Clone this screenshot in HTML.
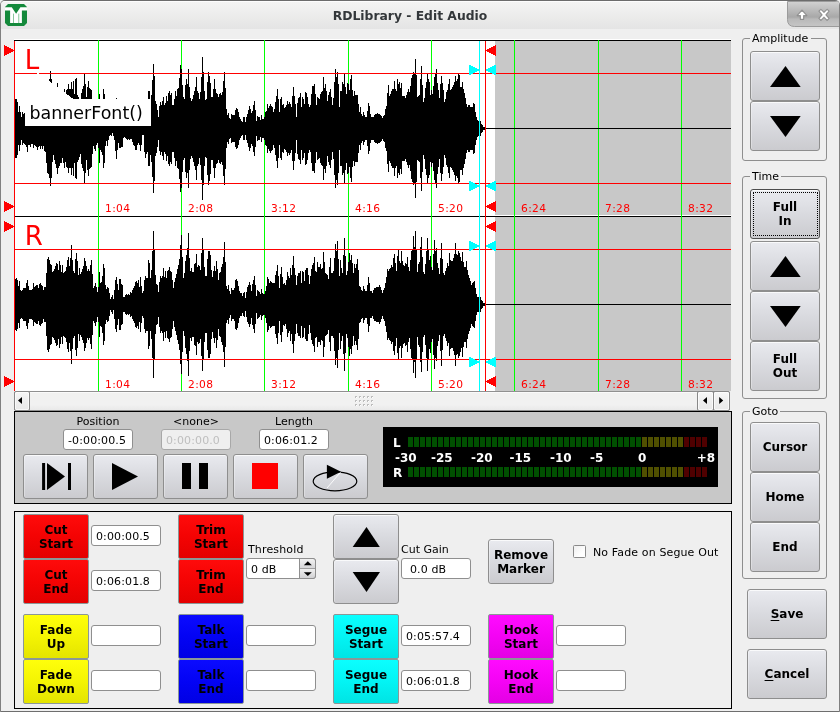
<!DOCTYPE html>
<html lang="en"><head><meta charset="utf-8"><title>RDLibrary - Edit Audio</title>
<style>
*{box-sizing:border-box;margin:0;padding:0}
html,body{width:840px;height:712px;overflow:hidden;background:#efefef}
body{font-family:"DejaVu Sans","Liberation Sans",sans-serif;font-size:11px;color:#000;position:relative}
.abs{position:absolute}
#win{will-change:transform;position:absolute;left:0;top:0;width:840px;height:712px;background:#efefef;border:1px solid #808080;border-top:1px solid #6c6c6c;border-bottom:1px solid #6e6e6e;border-radius:5px 5px 1px 1px;overflow:hidden}
#tbar{position:absolute;left:0;top:1px;width:840px;height:28px;background:linear-gradient(#fdfdfd 0,#fdfdfd 1px,#f4f4f3 1px,#e4e4e4 28px)}
#title{position:absolute;left:0;top:0;width:820px;height:30px;line-height:32px;text-align:center;font-weight:bold;font-size:12.35px;color:#33373a}
.btn{position:absolute;border:1px solid #8e8e8e;border-radius:3px;background:linear-gradient(#e9eaef,#d9dadf 50%,#cbcbcf);box-shadow:inset 0 1px 0 rgba(255,255,255,0.75),inset 1px 0 0 rgba(255,255,255,0.3);font-weight:bold;font-size:12px;text-align:center;line-height:14px;display:flex;align-items:center;justify-content:center;color:#000}
.gb{position:absolute;border:1px solid #8e8e8e;border-radius:3px}
.gbt{position:absolute;background:#efefef;padding:0 2px;font-size:11px;line-height:13px;white-space:nowrap}
.inp{position:absolute;border:1px solid #8f8f8f;border-radius:3px;background:#fff;font-size:11px;line-height:18px;padding:2px 0 0 4px;white-space:nowrap;letter-spacing:0.12px}
.lbl{position:absolute;font-size:11px;line-height:13px;white-space:nowrap}
.cbtn{position:absolute;border:1px solid #8e8e8e;border-radius:3px;font-weight:bold;font-size:12px;text-align:center;line-height:14px;display:flex;align-items:center;justify-content:center;color:#000}
</style></head>
<body><div id="win">
<div class="abs" style="left:-1px;top:-1px;width:840px;height:712px">
<div id="tbar"></div>
<div id="title">RDLibrary - Edit Audio</div>
<svg class="abs" style="left:0;top:0" width="840" height="30" viewBox="0 0 840 30">
<defs>
<linearGradient id="tabg" x1="0" y1="0" x2="0" y2="1"><stop offset="0" stop-color="#d2d2d2"/><stop offset="0.62" stop-color="#a8a8a8"/><stop offset="0.7" stop-color="#b9b9b9"/><stop offset="1" stop-color="#c6c6c6"/></linearGradient>
</defs>
<path d="M787.5,1.5 H840 V26.5 H794.5 Q787.5,26.5 787.5,19.5 Z" fill="url(#tabg)" stroke="#9b9b9b" stroke-width="1"/>
<g fill="#fff" stroke="#7d7d7d" stroke-width="1.2" stroke-opacity="0.75" stroke-linejoin="round">
<path d="M802,10.2 L806.8,15.6 L803.6,15.6 L803.6,19.3 L800.4,19.3 L800.4,15.6 L797.2,15.6 Z"/>
<path d="M819,11.2 L820.9,9.3 L824,12.4 L827.1,9.3 L829,11.2 L825.9,14.8 L829,18.4 L827.1,20.3 L824,17.2 L820.9,20.3 L819,18.4 L822.1,14.8 Z"/>
</g>
<g transform="translate(5,4)">
<path d="M3,0 H19 L22,3 V19 L19,22 H3 L0,19 V3 Z" fill="#14893b"/>
<path d="M0,3.2 H6.8 L11.1,9.7 L15.4,3.2 H22 V6.4 H16.9 V19 H5.1 V6.4 H0 Z" fill="#fff"/>
<rect x="8" y="9.6" width="0.8" height="9.4" fill="#6dba85"/>
<rect x="13.4" y="9.6" width="0.8" height="9.4" fill="#6dba85"/>
</g>
</svg>

<div class="gb" style="left:742px;top:38px;width:85px;height:123px"></div><div class="gbt" style="left:750px;top:32px;width:61px">Amplitude</div>
<div class="btn" style="left:750px;top:51px;width:70px;height:50px;"><svg width="70" height="50" viewBox="0 0 70 50" style="position:absolute;left:-1px;top:-1px"><polygon points="35.5,15 50.7,36 20,36" fill="#000"/></svg></div>
<div class="btn" style="left:750px;top:101px;width:70px;height:50px;"><svg width="70" height="50" viewBox="0 0 70 50" style="position:absolute;left:-1px;top:-1px"><polygon points="20,15 50.7,15 35.5,36" fill="#000"/></svg></div>
<div class="gb" style="left:742px;top:176px;width:85px;height:223px"></div><div class="gbt" style="left:750px;top:170px;width:31px">Time</div>
<div class="btn" style="left:750px;top:189px;width:70px;height:50px;border-color:#4d4d4d;">Full<br>In</div>
<div class="abs" style="left:753px;top:192px;width:65px;height:44px;border:1px dotted #000;border-radius:1px"></div>
<div class="btn" style="left:750px;top:241px;width:70px;height:50px;"><svg width="70" height="50" viewBox="0 0 70 50" style="position:absolute;left:-1px;top:-1px"><polygon points="35.5,15 50.7,36 20,36" fill="#000"/></svg></div>
<div class="btn" style="left:750px;top:291px;width:70px;height:50px;"><svg width="70" height="50" viewBox="0 0 70 50" style="position:absolute;left:-1px;top:-1px"><polygon points="20,15 50.7,15 35.5,36" fill="#000"/></svg></div>
<div class="btn" style="left:750px;top:341px;width:70px;height:50px;">Full<br>Out</div>
<div class="gb" style="left:742px;top:411px;width:85px;height:168px"></div><div class="gbt" style="left:750px;top:405px;width:30px">Goto</div>
<div class="btn" style="left:750px;top:422px;width:70px;height:50px;">Cursor</div>
<div class="btn" style="left:750px;top:472px;width:70px;height:50px;">Home</div>
<div class="btn" style="left:750px;top:522px;width:70px;height:50px;">End</div>
<div class="btn" style="left:747px;top:589px;width:80px;height:50px;"><span style="text-decoration:underline;text-underline-offset:2px;text-decoration-thickness:1px">S</span>ave</div>
<div class="btn" style="left:747px;top:649px;width:80px;height:50px;"><span style="text-decoration:underline;text-underline-offset:2px;text-decoration-thickness:1px">C</span>ancel</div>
<svg class="abs" style="left:0;top:0" width="840" height="400" viewBox="0 0 840 400" shape-rendering="crispEdges">
<rect x="14" y="39" width="717" height="352" fill="#fff"/>
<rect x="495" y="41" width="236" height="174" fill="#c8c8c8"/>
<rect x="495" y="217" width="236" height="174" fill="#c8c8c8"/>
<rect x="14" y="40" width="717" height="1" fill="#000"/><rect x="14" y="216" width="717" height="1" fill="#000"/>
<path d="M98,40V391M181,40V391M264,40V391M348,40V391M431,40V391M514,40V391M598,40V391M681,40V391" transform="translate(0.5,0)" stroke="#00ff00" stroke-width="1" fill="none"/>
<g font-family="DejaVu Sans, sans-serif" font-size="10.67" letter-spacing="0.35" fill="#ff0000" shape-rendering="auto">
<text x="105" y="212">1:04</text><text x="105" y="388">1:04</text>
<text x="188" y="212">2:08</text><text x="188" y="388">2:08</text>
<text x="271" y="212">3:12</text><text x="271" y="388">3:12</text>
<text x="355" y="212">4:16</text><text x="355" y="388">4:16</text>
<text x="438" y="212">5:20</text><text x="438" y="388">5:20</text>
<text x="521" y="212">6:24</text><text x="521" y="388">6:24</text>
<text x="605" y="212">7:28</text><text x="605" y="388">7:28</text>
<text x="688" y="212">8:32</text><text x="688" y="388">8:32</text>
</g>
<path d="M15,129V99H17V102H18V112H19V106H20V112H21V117H22V112H23V114H24V113H25V112H26V110H27V105H28V112H30V110H31V113H33V109H34V112H35V111H36V110H37V107H38V110H39V111H40V108H41V111H42V108H43V111H44V106H45V105H46V94H47V84H48V83H49V79H50V71H51V79H52V95H53V102H54V97H55V93H56V89H57V83H58V89H59V91H60V94H62V99H63V94H64V89H65V95H66V90H67V89H68V84H69V89H71V82H72V89H73V81H74V94H75V79H76V78H77V95H78V97H79V100H80V103H81V93H82V89H83V86H84V74H85V84H86V97H87V87H88V81H89V88H90V89H91V90H92V103H93V111H94V108H95V106H96V112H97V114H98V109H99V94H100V107H101V105H102V102H103V89H104V94H105V111H106V116H107V111H108V117H109V121H110V122H111V121H112V124H113V121H114V117H115V106H116V98H117V107H118V114H119V109H121V110H123V119H124V120H125V119H126V118H127V117H128V118H129V117H130V118H132V115H133V112H134V111H135V107H137V112H138V114H139V112H140V106H141V112H142V122H144V105H145V99H146V103H147V105H148V91H150V102H151V95H152V80H153V64H154V76H155V101H156V104H157V110H158V117H159V106H160V102H161V105H162V101H163V97H164V105H165V103H166V96H167V101H168V93H169V91H170V95H171V93H172V105H174V99H175V91H176V96H177V89H178V88H179V78H180V65H181V69H182V85H183V97H184V99H185V85H186V79H187V84H188V69H189V87H190V98H191V101H192V99H193V95H194V91H195V87H196V77H197V91H198V93H199V99H200V92H201V77H202V57H203V72H204V91H205V100H206V99H207V82H208V72H209V76H210V83H211V97H213V89H214V79H215V89H216V93H217V94H218V97H219V94H220V93H221V95H222V92H223V81H224V72H225V88H226V109H227V115H228V113H229V118H230V119H231V114H232V115H235V110H236V108H237V109H238V112H239V117H240V119H241V121H242V122H243V117H245V122H246V117H247V114H248V110H249V106H250V109H251V113H252V111H253V105H254V101H255V110H256V121H257V116H258V117H260V120H261V115H262V119H264V117H265V112H266V111H267V104H268V108H269V106H270V104H271V106H272V107H273V112H274V109H275V102H276V96H277V89H278V99H279V112H280V99H281V97H282V105H283V104H284V108H285V107H286V105H287V101H288V104H289V102H290V104H291V107H292V96H293V87H294V96H295V104H296V117H297V103H298V98H299V97H300V93H301V107H302V97H303V99H304V104H305V92H306V93H307V97H308V104H309V107H310V105H311V94H312V86H314V84H315V94H316V105H317V97H318V98H319V99H320V94H321V92H322V91H323V77H324V88H325V84H326V91H327V101H328V95H329V92H330V89H331V97H332V105H333V98H334V82H335V69H336V77H337V72H338V84H339V107H340V91H342V82H343V84H344V74H345V87H346V94H347V83H348V84H349V90H350V79H351V75H352V90H353V96H354V91H355V95H358V104H359V112H360V107H361V114H362V116H363V112H364V115H365V117H367V111H368V103H369V106H370V114H371V117H374V115H375V114H377V113H378V114H380V115H381V116H382V118H383V116H384V115H385V109H386V106H387V93H388V85H389V96H390V94H391V91H392V89H394V81H395V89H396V91H397V79H398V84H399V82H400V88H401V83H402V96H405V98H406V95H407V92H408V89H409V92H410V86H411V78H412V75H413V72H414V74H415V59H416V75H417V97H418V96H419V95H420V79H421V66H422V85H423V102H424V98H425V88H426V82H427V74H428V79H429V82H430V95H431V90H432V94H433V86H434V77H435V74H436V69H437V83H438V90H439V98H440V84H441V76H442V83H443V90H444V102H445V99H446V92H447V90H448V84H449V79H450V90H451V89H452V87H453V85H454V82H455V76H456V81H457V79H458V74H459V75H460V87H462V82H463V89H464V93H465V98H466V104H467V107H468V105H470V107H473V103H474V104H475V112H476V117H477V120H478V121H479V122H480V121H481V124H482V125H483V127H485V129V130H483V132H482V133H481V136H480V135H479V136H478V137H477V140H476V145H475V153H474V154H473V150H470V152H468V150H467V153H466V159H465V164H464V168H463V175H462V170H460V182H459V183H458V178H457V176H456V181H455V175H454V172H453V170H452V168H451V167H450V178H449V173H448V167H447V165H446V158H445V155H444V167H443V174H442V181H441V173H440V159H439V167H438V174H437V188H436V183H435V180H434V171H433V163H432V167H431V162H430V175H429V178H428V183H427V175H426V169H425V159H424V155H423V172H422V191H421V178H420V162H419V161H418V160H417V182H416V198H415V183H414V185H413V182H412V179H411V171H410V165H409V168H408V165H407V162H406V159H405V161H402V174H401V169H400V175H399V173H398V178H397V166H396V168H395V176H394V168H392V166H391V163H390V161H389V172H388V164H387V151H386V148H385V142H384V141H383V139H382V141H381V142H380V143H378V144H377V143H375V142H374V140H371V143H370V151H369V154H368V146H367V140H365V142H364V145H363V141H362V143H361V150H360V145H359V153H358V162H355V166H354V161H353V167H352V182H351V178H350V167H349V173H348V174H347V163H346V170H345V183H344V173H343V175H342V166H340V150H339V173H338V185H337V180H336V188H335V175H334V159H333V152H332V160H331V168H330V165H329V162H328V156H327V166H326V173H325V169H324V180H323V166H322V165H321V163H320V158H319V159H318V160H317V152H316V163H315V173H314V171H312V163H311V152H310V150H309V153H308V160H307V164H306V165H305V153H304V158H303V160H302V150H301V164H300V160H299V159H298V154H297V140H296V153H295V161H294V170H293V161H292V150H291V153H290V155H289V153H288V156H287V152H286V150H285V149H284V153H283V152H282V160H281V158H280V145H279V158H278V168H277V161H276V155H275V148H274V145H273V150H272V151H271V153H270V151H269V149H268V153H267V146H266V145H265V140H264V138H262V142H261V137H260V140H258V141H257V136H256V147H255V156H254V152H253V146H252V144H251V148H250V151H249V147H248V143H247V140H246V135H245V140H243V135H242V136H241V138H240V140H239V145H238V148H237V149H236V147H235V142H232V143H231V138H230V139H229V144H228V142H227V148H226V169H225V185H224V176H223V165H222V162H221V164H220V163H219V160H218V163H217V164H216V168H215V178H214V168H213V160H211V174H210V181H209V185H208V175H207V158H206V157H205V166H204V185H203V200H202V180H201V165H200V158H199V164H198V166H197V180H196V170H195V166H194V162H193V158H192V156H191V159H190V170H189V188H188V173H187V178H186V172H185V158H184V160H183V172H182V188H181V192H180V179H179V169H178V168H177V161H176V166H175V158H174V152H172V164H171V162H170V166H169V164H168V156H167V161H166V154H165V152H164V160H163V156H162V152H161V155H160V151H159V140H158V147H157V153H156V156H155V181H154V193H153V177H152V162H151V155H150V166H148V152H147V154H146V158H145V152H144V135H142V145H141V151H140V145H139V143H138V145H137V150H135V146H134V145H133V142H132V139H130V140H129V139H128V140H127V139H126V138H125V137H124V138H123V147H121V148H119V143H118V150H117V159H116V151H115V140H114V136H113V133H112V136H111V135H110V136H109V140H108V146H107V141H106V146H105V163H104V168H103V155H102V152H101V150H100V163H99V148H98V143H97V145H96V151H95V149H94V146H93V154H92V167H91V168H90V169H89V176H88V170H87V160H86V173H85V183H84V171H83V168H82V164H81V154H80V157H79V160H78V162H77V179H76V178H75V163H74V176H73V168H72V175H71V168H69V173H68V168H67V167H66V162H65V168H64V163H63V158H62V163H60V166H59V168H58V174H57V168H56V164H55V160H54V155H53V162H52V178H51V186H50V178H49V174H48V173H47V163H46V152H45V151H44V146H43V149H42V146H41V149H40V146H39V147H38V150H37V147H36V146H35V145H34V148H33V144H31V147H30V145H28V152H27V147H26V145H25V144H24V143H23V145H22V140H21V145H20V151H19V145H18V155H17V158H15Z" fill="#000"/>
<path d="M15,305V279H16V278H17V280H18V286H19V281H20V290H21V291H22V290H23V288H26V283H27V280H28V286H29V290H32V289H33V283H34V287H35V286H36V285H38V288H39V284H40V283H41V285H42V286H43V290H44V287H46V273H47V259H48V257H49V260H50V264H51V265H52V272H53V271H54V269H55V266H56V263H57V264H58V270H59V261H60V265H61V272H62V265H63V273H64V272H65V271H66V267H67V260H68V257H69V266H70V258H71V245H72V260H73V271H74V273H75V259H76V253H77V261H78V275H79V268H80V274H81V272H82V269H83V266H84V258H85V261H86V266H87V271H88V269H89V271H90V265H91V260H92V274H93V288H94V286H95V283H96V287H97V292H98V287H99V272H100V283H101V282H102V276H103V264H104V268H105V285H106V289H107V287H108V288H109V293H110V299H111V297H112V295H113V299H114V290H115V280H116V277H117V284H118V290H119V279H121V284H122V285H123V297H125V295H126V294H127V295H128V294H129V295H130V292H131V293H132V290H133V288H134V286H135V282H136V281H137V283H138V280H139V287H140V277H141V286H142V293H143V291H144V280H145V276H146V278H148V260H149V263H150V278H151V270H152V251H153V231H154V250H155V275H156V284H157V285H158V292H159V282H160V276H161V278H162V276H163V268H164V277H165V271H166V278H167V271H168V270H169V267H170V271H171V272H172V280H173V288H174V282H175V278H176V274H177V269H178V265H179V259H180V245H181V235H182V257H183V278H184V273H185V261H186V255H187V248H188V233H189V258H190V271H191V268H192V272H194V264H195V263H196V254H197V267H198V265H199V266H200V270H201V253H202V238H203V250H204V267H205V276H207V259H208V251H210V255H211V270H212V277H213V271H214V266H215V271H216V261H217V269H218V280H219V273H220V272H221V267H222V264H223V257H224V242H225V262H226V286H227V289H228V285H229V291H230V294H231V288H232V290H234V288H235V280H236V279H237V281H238V286H239V291H240V293H242V296H243V293H244V292H245V298H246V292H247V287H248V285H249V282H250V285H251V291H252V284H253V280H254V276H255V285H256V296H257V290H258V291H259V292H260V294H261V289H262V293H263V294H265V291H266V286H267V277H268V279H269V283H270V281H271V282H272V283H275V275H276V271H277V265H278V276H279V288H280V274H281V267H282V277H283V284H284V283H285V285H286V280H287V272H288V276H289V278H290V268H291V275H292V265H293V256H294V268H295V275H296V285H297V276H298V273H300V271H301V283H302V271H303V272H304V281H305V270H306V268H308V275H309V284H310V276H311V269H312V265H313V263H314V257H315V271H316V272H317V262H318V267H320V264H321V269H322V268H323V252H324V262H325V273H326V274H327V275H328V279H329V267H330V258H331V273H333V271H334V258H335V244H336V251H337V241H338V259H339V276H340V260H341V268H342V273H343V255H344V238H345V256H346V275H347V271H348V262H349V253H350V260H351V255H352V263H353V273H354V264H355V268H356V264H357V259H358V270H359V286H360V287H361V290H362V291H363V286H364V289H365V291H367V285H368V277H369V283H370V291H372V293H373V290H374V288H376V287H379V285H380V287H381V290H382V293H383V290H384V288H385V283H386V277H387V269H388V271H389V269H390V268H391V265H392V267H393V258H394V254H395V263H396V271H397V256H398V249H399V261H400V263H401V251H402V261H403V265H404V266H405V263H406V264H407V257H408V267H409V271H410V260H411V251H412V250H413V236H414V247H415V231H416V250H417V272H418V264H419V262H420V247H421V237H422V257H423V272H424V274H425V264H426V251H427V238H428V250H429V260H430V256H431V267H432V270H433V254H434V240H435V251H436V248H437V263H438V268H439V274H440V258H441V243H442V259H443V273H444V275H445V271H446V268H447V263H448V266H449V253H450V260H451V261H453V258H454V254H455V243H456V254H457V255H458V251H459V253H460V257H461V261H462V252H463V262H464V267H466V261H467V270H468V275H469V278H470V281H471V285H472V283H473V282H474V281H475V288H476V294H477V297H479V298H480V297H481V300H482V301H483V303H485V305V306H483V308H482V309H481V312H480V311H479V312H477V315H476V321H475V328H474V327H473V326H472V324H471V328H470V331H469V334H468V339H467V348H466V342H464V347H463V357H462V348H461V352H460V356H459V358H458V354H457V355H456V366H455V355H454V351H453V348H451V349H450V356H449V343H448V346H447V341H446V338H445V334H444V336H443V350H442V366H441V351H440V335H439V341H438V346H437V361H436V358H435V369H434V355H433V339H432V342H431V353H430V349H429V359H428V371H427V358H426V345H425V335H424V337H423V352H422V372H421V362H420V347H419V345H418V337H417V359H416V378H415V362H414V373H413V359H412V358H411V349H410V338H409V342H408V352H407V345H406V346H405V343H404V344H403V348H402V358H401V346H400V348H399V360H398V353H397V338H396V346H395V355H394V351H393V342H392V344H391V341H390V340H389V338H388V340H387V332H386V326H385V321H384V319H383V316H382V319H381V322H380V324H379V322H376V321H374V319H373V316H372V318H370V326H369V332H368V324H367V318H365V320H364V323H363V318H362V319H361V322H360V323H359V339H358V350H357V345H356V341H355V345H354V336H353V346H352V354H351V349H350V356H349V347H348V338H347V334H346V353H345V371H344V354H343V336H342V341H341V349H340V333H339V350H338V368H337V358H336V365H335V351H334V338H333V336H331V351H330V342H329V330H328V334H327V335H326V336H325V347H324V357H323V341H322V340H321V345H320V342H318V347H317V337H316V338H315V352H314V346H313V344H312V340H311V333H310V325H309V334H308V341H306V339H305V328H304V337H303V338H302V326H301V338H300V336H298V333H297V324H296V334H295V341H294V353H293V344H292V334H291V341H290V331H289V333H288V337H287V329H286V324H285V326H284V325H283V332H282V342H281V335H280V321H279V333H278V344H277V338H276V334H275V326H272V327H271V328H270V326H269V330H268V332H267V323H266V318H265V315H263V316H262V320H261V315H260V317H259V318H258V319H257V313H256V324H255V333H254V329H253V325H252V318H251V324H250V327H249V324H248V322H247V317H246V311H245V317H244V316H243V313H242V316H240V318H239V323H238V328H237V330H236V329H235V321H234V319H232V321H231V315H230V318H229V324H228V320H227V323H226V347H225V367H224V352H223V345H222V342H221V337H220V336H219V329H218V340H217V348H216V338H215V343H214V338H213V332H212V339H211V354H210V358H208V350H207V333H205V342H204V359H203V371H202V356H201V339H200V343H199V344H198V342H197V355H196V346H195V345H194V337H192V341H191V338H190V351H189V376H188V361H187V354H186V348H185V336H184V331H183V352H182V374H181V364H180V350H179V344H178V340H177V335H176V331H175V327H174V321H173V329H172V337H171V338H170V342H169V339H168V338H167V331H166V338H165V332H164V341H163V333H162V331H161V333H160V327H159V317H158V324H157V325H156V334H155V359H154V378H153V358H152V339H151V331H150V346H149V349H148V331H146V333H145V329H144V318H143V316H142V323H141V332H140V322H139V329H138V326H137V328H136V327H135V323H134V321H133V319H132V316H131V317H130V314H129V315H128V314H127V315H126V314H125V312H123V324H122V325H121V330H119V319H118V325H117V332H116V329H115V319H114V310H113V314H112V312H111V310H110V316H109V321H108V322H107V320H106V324H105V341H104V345H103V333H102V327H101V326H100V337H99V322H98V317H97V322H96V326H95V323H94V321H93V335H92V349H91V344H90V338H89V340H88V338H87V343H86V348H85V351H84V343H83V340H82V337H81V335H80V341H79V334H78V348H77V356H76V350H75V336H74V338H73V349H72V364H71V351H70V343H69V352H68V349H67V342H66V338H65V337H64V336H63V344H62V337H61V344H60V348H59V339H58V345H57V346H56V343H55V340H54V338H53V337H52V344H51V345H50V349H49V352H48V350H47V336H46V322H44V319H43V323H42V324H41V326H40V325H39V321H38V324H36V323H35V322H34V326H33V320H32V319H29V323H28V329H27V326H26V321H23V319H22V318H21V319H20V328H19V323H18V329H17V331H16V330H15Z" fill="#000"/>
<rect x="485" y="128" width="246" height="1" fill="#000"/><rect x="485" y="304" width="246" height="1" fill="#000"/>
<polygon points="36.5,72.3 37.2,72.3 72.8,98.6 151,98.6 151,126 25,126 25,98.6 36.5,98.6" fill="#fff"/>
<rect x="14" y="73" width="717" height="1" fill="#ff0000"/>
<rect x="14" y="183" width="717" height="1" fill="#ff0000"/>
<rect x="14" y="249" width="717" height="1" fill="#ff0000"/>
<rect x="14" y="359" width="717" height="1" fill="#ff0000"/>
<rect x="37" y="73" width="2" height="1" fill="#fff"/>
<rect x="14" y="41" width="1" height="350" fill="#ff0000"/>
<rect x="479" y="41" width="1" height="350" fill="#00ffff"/>
<rect x="485" y="41" width="1" height="350" fill="#ff0000"/>
<polygon points="4,44.8 15,50.3 4,55.8" fill="#ff0000"/>
<polygon points="496,44.8 485,50.3 496,55.8" fill="#ff0000"/>
<polygon points="4,200.8 15,206.3 4,211.8" fill="#ff0000"/>
<polygon points="496,200.8 485,206.3 496,211.8" fill="#ff0000"/>
<polygon points="4,220.8 15,226.3 4,231.8" fill="#ff0000"/>
<polygon points="496,220.8 485,226.3 496,231.8" fill="#ff0000"/>
<polygon points="4,376.0 15,381.5 4,387.0" fill="#ff0000"/>
<polygon points="496,376.0 485,381.5 496,387.0" fill="#ff0000"/>
<polygon points="469,64.5 480,70 469,75.5" fill="#00ffff"/>
<polygon points="496,64.5 485,70 496,75.5" fill="#00ffff"/>
<polygon points="469,180.5 480,186 469,191.5" fill="#00ffff"/>
<polygon points="496,180.5 485,186 496,191.5" fill="#00ffff"/>
<polygon points="469,240.5 480,246 469,251.5" fill="#00ffff"/>
<polygon points="496,240.5 485,246 496,251.5" fill="#00ffff"/>
<polygon points="469,356.5 480,362 469,367.5" fill="#00ffff"/>
<polygon points="496,356.5 485,362 496,367.5" fill="#00ffff"/>
<g font-family="DejaVu Sans, sans-serif" font-size="26" fill="#ff0000" shape-rendering="auto"><text x="24.8" y="69">L</text><text x="24.8" y="245">R</text></g>
<text x="29.5" y="119" font-family="DejaVu Sans, sans-serif" font-size="17.45" fill="#000" shape-rendering="auto">bannerFont()</text>
</svg>
<div class="abs" style="left:14px;top:391px;width:716px;height:20px;border:1px solid #909090;border-radius:2px;background:linear-gradient(#fafafa 0,#fafafa 1px,#f1f1f0 1px,#f1f1f1 70%,#e9e9e9)"></div>
<div class="abs" style="left:14px;top:391px;width:16px;height:20px;border:1px solid #888;border-radius:2px;background:linear-gradient(#f7f7f7,#efefef 45%,#eaeaea);box-shadow:inset 0 0 0 1px rgba(255,255,255,0.7)"></div>
<div class="abs" style="left:697px;top:391px;width:17px;height:20px;border:1px solid #888;border-radius:2px;background:linear-gradient(#f7f7f7,#efefef 45%,#eaeaea);box-shadow:inset 0 0 0 1px rgba(255,255,255,0.7)"></div>
<div class="abs" style="left:713px;top:391px;width:17px;height:20px;border:1px solid #888;border-radius:2px;background:linear-gradient(#f7f7f7,#efefef 45%,#eaeaea);box-shadow:inset 0 0 0 1px rgba(255,255,255,0.7)"></div>
<svg class="abs" style="left:14px;top:391px" width="716" height="20" viewBox="0 0 716 20"><polygon points="4,9.5 8,6 8,13" fill="#000"/><polygon points="689,9.5 693,6 693,13" fill="#000"/><polygon points="709.2,9.5 705.2,6 705.2,13" fill="#000"/><rect x="341" y="5" width="2" height="2" fill="#bdbdbd"/><rect x="342" y="6" width="1" height="1" fill="#fff"/><rect x="341" y="9" width="2" height="2" fill="#bdbdbd"/><rect x="342" y="10" width="1" height="1" fill="#fff"/><rect x="341" y="13" width="2" height="2" fill="#bdbdbd"/><rect x="342" y="14" width="1" height="1" fill="#fff"/><rect x="345" y="5" width="2" height="2" fill="#bdbdbd"/><rect x="346" y="6" width="1" height="1" fill="#fff"/><rect x="345" y="9" width="2" height="2" fill="#bdbdbd"/><rect x="346" y="10" width="1" height="1" fill="#fff"/><rect x="345" y="13" width="2" height="2" fill="#bdbdbd"/><rect x="346" y="14" width="1" height="1" fill="#fff"/><rect x="349" y="5" width="2" height="2" fill="#bdbdbd"/><rect x="350" y="6" width="1" height="1" fill="#fff"/><rect x="349" y="9" width="2" height="2" fill="#bdbdbd"/><rect x="350" y="10" width="1" height="1" fill="#fff"/><rect x="349" y="13" width="2" height="2" fill="#bdbdbd"/><rect x="350" y="14" width="1" height="1" fill="#fff"/><rect x="353" y="5" width="2" height="2" fill="#bdbdbd"/><rect x="354" y="6" width="1" height="1" fill="#fff"/><rect x="353" y="9" width="2" height="2" fill="#bdbdbd"/><rect x="354" y="10" width="1" height="1" fill="#fff"/><rect x="353" y="13" width="2" height="2" fill="#bdbdbd"/><rect x="354" y="14" width="1" height="1" fill="#fff"/><rect x="357" y="5" width="2" height="2" fill="#bdbdbd"/><rect x="358" y="6" width="1" height="1" fill="#fff"/><rect x="357" y="9" width="2" height="2" fill="#bdbdbd"/><rect x="358" y="10" width="1" height="1" fill="#fff"/><rect x="357" y="13" width="2" height="2" fill="#bdbdbd"/><rect x="358" y="14" width="1" height="1" fill="#fff"/></svg>
<div class="abs" style="left:14px;top:411px;width:718px;height:93px;background:#c8c8c8;border:1px solid #000"></div>
<div class="lbl" style="left:63px;top:415px;width:70px;text-align:center">Position</div>
<div class="lbl" style="left:161px;top:415px;width:70px;text-align:center">&lt;none&gt;</div>
<div class="lbl" style="left:259px;top:415px;width:70px;text-align:center">Length</div>
<div class="inp" style="left:63px;top:429px;width:70px;height:21px;">-0:00:00.5</div>
<div class="inp" style="left:161px;top:429px;width:70px;height:21px;background:#efefef;color:#bebebe;border-color:#a8a8a8">0:00:00.0</div>
<div class="inp" style="left:259px;top:429px;width:70px;height:21px;">0:06:01.2</div>
<div class="btn" style="left:23px;top:454px;width:65px;height:45px;"><svg width="65" height="45" viewBox="0 0 65 45" style="position:absolute;left:-1px;top:-1px"><rect x="19.1" y="9" width="3" height="27" fill="#000"/><polygon points="24,9 42,22.5 24,36" fill="#000"/><rect x="45" y="9" width="3" height="27" fill="#000"/></svg></div>
<div class="btn" style="left:93px;top:454px;width:65px;height:45px;"><svg width="65" height="45" viewBox="0 0 65 45" style="position:absolute;left:-1px;top:-1px"><polygon points="19,9 45,22.5 19,36" fill="#000"/></svg></div>
<div class="btn" style="left:163px;top:454px;width:65px;height:45px;"><svg width="65" height="45" viewBox="0 0 65 45" style="position:absolute;left:-1px;top:-1px"><rect x="19" y="9" width="9" height="26" fill="#000"/><rect x="36" y="9" width="9" height="26" fill="#000"/></svg></div>
<div class="btn" style="left:233px;top:454px;width:65px;height:45px;"><svg width="65" height="45" viewBox="0 0 65 45" style="position:absolute;left:-1px;top:-1px"><rect x="19" y="9" width="26" height="26" fill="#f00"/></svg></div>
<div class="btn" style="left:303px;top:454px;width:65px;height:45px;"><svg width="65" height="45" viewBox="0 0 65 45" style="position:absolute;left:-1px;top:-1px"><ellipse cx="32" cy="27.3" rx="21.8" ry="9.5" fill="none" stroke="#000" stroke-width="1.2"/><polygon points="23.9,10.8 23.9,24.8 38,17.8" fill="#000"/><line x1="24" y1="34" x2="37.5" y2="18.3" stroke="#fff" stroke-width="0.9"/></svg></div>
<svg class="abs" style="left:383px;top:427px" width="335" height="60" viewBox="0 0 335 60"><rect width="335" height="60" fill="#000"/><rect x="25" y="10" width="5" height="10" fill="#005000"/><rect x="25" y="40" width="5" height="10" fill="#005000"/><rect x="31" y="10" width="5" height="10" fill="#005000"/><rect x="31" y="40" width="5" height="10" fill="#005000"/><rect x="37" y="10" width="5" height="10" fill="#005000"/><rect x="37" y="40" width="5" height="10" fill="#005000"/><rect x="43" y="10" width="5" height="10" fill="#005000"/><rect x="43" y="40" width="5" height="10" fill="#005000"/><rect x="49" y="10" width="5" height="10" fill="#005000"/><rect x="49" y="40" width="5" height="10" fill="#005000"/><rect x="55" y="10" width="5" height="10" fill="#005000"/><rect x="55" y="40" width="5" height="10" fill="#005000"/><rect x="61" y="10" width="5" height="10" fill="#005000"/><rect x="61" y="40" width="5" height="10" fill="#005000"/><rect x="67" y="10" width="5" height="10" fill="#005000"/><rect x="67" y="40" width="5" height="10" fill="#005000"/><rect x="73" y="10" width="5" height="10" fill="#005000"/><rect x="73" y="40" width="5" height="10" fill="#005000"/><rect x="79" y="10" width="5" height="10" fill="#005000"/><rect x="79" y="40" width="5" height="10" fill="#005000"/><rect x="85" y="10" width="5" height="10" fill="#005000"/><rect x="85" y="40" width="5" height="10" fill="#005000"/><rect x="91" y="10" width="5" height="10" fill="#005000"/><rect x="91" y="40" width="5" height="10" fill="#005000"/><rect x="97" y="10" width="5" height="10" fill="#005000"/><rect x="97" y="40" width="5" height="10" fill="#005000"/><rect x="103" y="10" width="5" height="10" fill="#005000"/><rect x="103" y="40" width="5" height="10" fill="#005000"/><rect x="109" y="10" width="5" height="10" fill="#005000"/><rect x="109" y="40" width="5" height="10" fill="#005000"/><rect x="115" y="10" width="5" height="10" fill="#005000"/><rect x="115" y="40" width="5" height="10" fill="#005000"/><rect x="121" y="10" width="5" height="10" fill="#005000"/><rect x="121" y="40" width="5" height="10" fill="#005000"/><rect x="127" y="10" width="5" height="10" fill="#005000"/><rect x="127" y="40" width="5" height="10" fill="#005000"/><rect x="133" y="10" width="5" height="10" fill="#005000"/><rect x="133" y="40" width="5" height="10" fill="#005000"/><rect x="139" y="10" width="5" height="10" fill="#005000"/><rect x="139" y="40" width="5" height="10" fill="#005000"/><rect x="145" y="10" width="5" height="10" fill="#005000"/><rect x="145" y="40" width="5" height="10" fill="#005000"/><rect x="151" y="10" width="5" height="10" fill="#005000"/><rect x="151" y="40" width="5" height="10" fill="#005000"/><rect x="157" y="10" width="5" height="10" fill="#005000"/><rect x="157" y="40" width="5" height="10" fill="#005000"/><rect x="163" y="10" width="5" height="10" fill="#005000"/><rect x="163" y="40" width="5" height="10" fill="#005000"/><rect x="169" y="10" width="5" height="10" fill="#005000"/><rect x="169" y="40" width="5" height="10" fill="#005000"/><rect x="175" y="10" width="5" height="10" fill="#005000"/><rect x="175" y="40" width="5" height="10" fill="#005000"/><rect x="181" y="10" width="5" height="10" fill="#005000"/><rect x="181" y="40" width="5" height="10" fill="#005000"/><rect x="187" y="10" width="5" height="10" fill="#005000"/><rect x="187" y="40" width="5" height="10" fill="#005000"/><rect x="193" y="10" width="5" height="10" fill="#005000"/><rect x="193" y="40" width="5" height="10" fill="#005000"/><rect x="199" y="10" width="5" height="10" fill="#005000"/><rect x="199" y="40" width="5" height="10" fill="#005000"/><rect x="205" y="10" width="5" height="10" fill="#005000"/><rect x="205" y="40" width="5" height="10" fill="#005000"/><rect x="211" y="10" width="5" height="10" fill="#005000"/><rect x="211" y="40" width="5" height="10" fill="#005000"/><rect x="217" y="10" width="5" height="10" fill="#005000"/><rect x="217" y="40" width="5" height="10" fill="#005000"/><rect x="223" y="10" width="5" height="10" fill="#005000"/><rect x="223" y="40" width="5" height="10" fill="#005000"/><rect x="229" y="10" width="5" height="10" fill="#005000"/><rect x="229" y="40" width="5" height="10" fill="#005000"/><rect x="235" y="10" width="5" height="10" fill="#005000"/><rect x="235" y="40" width="5" height="10" fill="#005000"/><rect x="241" y="10" width="5" height="10" fill="#005000"/><rect x="241" y="40" width="5" height="10" fill="#005000"/><rect x="247" y="10" width="5" height="10" fill="#005000"/><rect x="247" y="40" width="5" height="10" fill="#005000"/><rect x="253" y="10" width="5" height="10" fill="#005000"/><rect x="253" y="40" width="5" height="10" fill="#005000"/><rect x="259" y="10" width="5" height="10" fill="#505000"/><rect x="259" y="40" width="5" height="10" fill="#505000"/><rect x="265" y="10" width="5" height="10" fill="#505000"/><rect x="265" y="40" width="5" height="10" fill="#505000"/><rect x="271" y="10" width="5" height="10" fill="#505000"/><rect x="271" y="40" width="5" height="10" fill="#505000"/><rect x="277" y="10" width="5" height="10" fill="#505000"/><rect x="277" y="40" width="5" height="10" fill="#505000"/><rect x="283" y="10" width="5" height="10" fill="#505000"/><rect x="283" y="40" width="5" height="10" fill="#505000"/><rect x="289" y="10" width="5" height="10" fill="#505000"/><rect x="289" y="40" width="5" height="10" fill="#505000"/><rect x="295" y="10" width="5" height="10" fill="#505000"/><rect x="295" y="40" width="5" height="10" fill="#505000"/><rect x="301" y="10" width="5" height="10" fill="#500000"/><rect x="301" y="40" width="5" height="10" fill="#500000"/><rect x="307" y="10" width="5" height="10" fill="#500000"/><rect x="307" y="40" width="5" height="10" fill="#500000"/><rect x="313" y="10" width="5" height="10" fill="#500000"/><rect x="313" y="40" width="5" height="10" fill="#500000"/><rect x="319" y="10" width="5" height="10" fill="#500000"/><rect x="319" y="40" width="5" height="10" fill="#500000"/><g font-family="DejaVu Sans, sans-serif" font-weight="bold" font-size="12" fill="#fff"><text x="10" y="20">L</text><text x="10" y="50">R</text><text x="12" y="35">-30</text><text x="48" y="35">-25</text><text x="88" y="35">-20</text><text x="126.5" y="35">-15</text><text x="167" y="35">-10</text><text x="207" y="35">-5</text><text x="255" y="35">0</text><text x="313.8" y="35">+8</text></g></svg>
<div class="abs" style="left:14px;top:511px;width:718px;height:198px;background:#efefef;border:1px solid #000"></div>
<div class="btn" style="left:23px;top:514px;width:66px;height:45px;box-shadow:none;border-radius:2px;border-color:#8b9797;background:linear-gradient(#ff0b0b,#f40303 50%,#e40000);">Cut<br>Start</div>
<div class="btn" style="left:23px;top:559px;width:66px;height:45px;box-shadow:none;border-radius:2px;border-color:#8b9797;background:linear-gradient(#ff0b0b,#f40303 50%,#e40000);">Cut<br>End</div>
<div class="btn" style="left:23px;top:614px;width:66px;height:45px;box-shadow:none;border-radius:2px;border-color:#8b9797;background:linear-gradient(#ffff0b,#f4f403 50%,#e4e400);">Fade<br>Up</div>
<div class="btn" style="left:23px;top:659px;width:66px;height:45px;box-shadow:none;border-radius:2px;border-color:#8b9797;background:linear-gradient(#ffff0b,#f4f403 50%,#e4e400);">Fade<br>Down</div>
<div class="btn" style="left:178px;top:514px;width:66px;height:45px;box-shadow:none;border-radius:2px;border-color:#8b9797;background:linear-gradient(#ff0b0b,#f40303 50%,#e40000);">Trim<br>Start</div>
<div class="btn" style="left:178px;top:559px;width:66px;height:45px;box-shadow:none;border-radius:2px;border-color:#8b9797;background:linear-gradient(#ff0b0b,#f40303 50%,#e40000);">Trim<br>End</div>
<div class="btn" style="left:178px;top:614px;width:66px;height:45px;box-shadow:none;border-radius:2px;border-color:#8b9797;background:linear-gradient(#0b0bff,#0303f4 50%,#0000e4);">Talk<br>Start</div>
<div class="btn" style="left:178px;top:659px;width:66px;height:45px;box-shadow:none;border-radius:2px;border-color:#8b9797;background:linear-gradient(#0b0bff,#0303f4 50%,#0000e4);">Talk<br>End</div>
<div class="btn" style="left:333px;top:514px;width:66px;height:45px;"><svg width="65" height="45" viewBox="0 0 65 45" style="position:absolute;left:-1px;top:-1px"><polygon points="33.5,13 46.8,33 19.7,33" fill="#000"/></svg></div>
<div class="btn" style="left:333px;top:559px;width:66px;height:45px;"><svg width="65" height="45" viewBox="0 0 65 45" style="position:absolute;left:-1px;top:-1px"><polygon points="19.7,13 47,13 33.5,33" fill="#000"/></svg></div>
<div class="btn" style="left:333px;top:614px;width:66px;height:45px;box-shadow:none;border-radius:2px;border-color:#8b9797;background:linear-gradient(#0bffff,#03f4f4 50%,#00e4e4);">Segue<br>Start</div>
<div class="btn" style="left:333px;top:659px;width:66px;height:45px;box-shadow:none;border-radius:2px;border-color:#8b9797;background:linear-gradient(#0bffff,#03f4f4 50%,#00e4e4);">Segue<br>End</div>
<div class="btn" style="left:488px;top:539px;width:66px;height:45px;">Remove<br>Marker</div>
<div class="btn" style="left:488px;top:614px;width:66px;height:45px;box-shadow:none;border-radius:2px;border-color:#8b9797;background:linear-gradient(#ff0bff,#f403f4 50%,#e400e4);">Hook<br>Start</div>
<div class="btn" style="left:488px;top:659px;width:66px;height:45px;box-shadow:none;border-radius:2px;border-color:#8b9797;background:linear-gradient(#ff0bff,#f403f4 50%,#e400e4);">Hook<br>End</div>
<div class="inp" style="left:91px;top:525px;width:70px;height:21px;">0:00:00.5</div>
<div class="inp" style="left:91px;top:570px;width:70px;height:21px;">0:06:01.8</div>
<div class="inp" style="left:91px;top:625px;width:70px;height:21px;"></div>
<div class="inp" style="left:91px;top:670px;width:70px;height:21px;"></div>
<div class="inp" style="left:246px;top:625px;width:70px;height:21px;"></div>
<div class="inp" style="left:246px;top:670px;width:70px;height:21px;"></div>
<div class="inp" style="left:401px;top:558px;width:70px;height:21px;padding-left:8px">0.0 dB</div>
<div class="inp" style="left:401px;top:625px;width:70px;height:21px;">0:05:57.4</div>
<div class="inp" style="left:401px;top:670px;width:70px;height:21px;">0:06:01.8</div>
<div class="inp" style="left:556px;top:625px;width:70px;height:21px;"></div>
<div class="inp" style="left:556px;top:670px;width:70px;height:21px;"></div>
<div class="lbl" style="left:248px;top:543px;letter-spacing:0.15px">Threshold</div>
<div class="lbl" style="left:401px;top:543px;">Cut Gain</div>
<div class="inp" style="left:246px;top:558px;width:70px;height:21px;padding-left:4px">0 dB</div>
<div class="abs" style="left:299px;top:558px;width:17px;height:21px;border:1px solid #8f8f8f;border-radius:0 3px 3px 0;background:linear-gradient(#f2f2f2 0,#d6d6d8 48%,#a0a0a0 48%,#a0a0a0 52%,#f0f0f0 52%,#d2d2d4 100%)"></div>
<svg class="abs" style="left:299px;top:558px" width="17" height="21" viewBox="0 0 17 21"><polygon points="8.8,3.3 12.8,7.2 4.8,7.2" fill="#000"/><polygon points="4.8,14.2 12.8,14.2 8.8,18.1" fill="#000"/></svg>
<div class="abs" style="left:573px;top:545px;width:13px;height:13px;border:1px solid #8a8a8a;border-radius:1.5px;background:linear-gradient(135deg,#efefef,#ffffff 70%)"></div>
<div class="lbl" style="left:593px;top:546px;letter-spacing:0.13px">No Fade on Segue Out</div>
</div></div></body></html>
